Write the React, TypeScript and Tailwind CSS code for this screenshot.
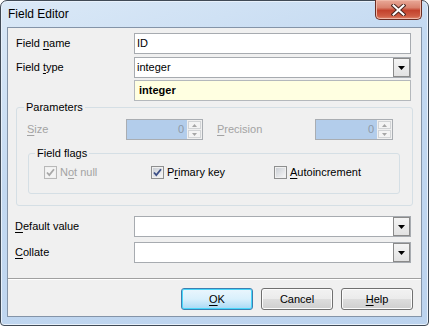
import React from 'react'

function U({ children }: { children: React.ReactNode }) {
  return <span className="underline underline-offset-[2px]">{children}</span>
}

function DropArrow() {
  return (
    <div className="flex h-[19px] w-[17px] items-center justify-center border border-[#8a8a8a] bg-gradient-to-b from-[#f4f4f4] to-[#e2e2e2]">
      <svg width="7" height="4" viewBox="0 0 7 4">
        <path d="M0 0h7L3.5 4z" fill="#000" />
      </svg>
    </div>
  )
}

function Combo({ value }: { value?: string }) {
  return (
    <div className="flex h-[21px] flex-1 items-center border border-[#a7abb0] bg-white pl-[1px] pr-[0px]">
      <span className="flex-1 pl-[1px]">{value}</span>
      <DropArrow />
    </div>
  )
}

function Spin({ width }: { width: string }) {
  return (
    <div className={`flex h-[21px] items-stretch border border-[#a9adb2] bg-[#b3cdeb] ${width}`}>
      <span className="flex flex-1 items-center justify-end pr-[3px] text-[#8d99a8]">0</span>
      <div className="flex w-[15px] flex-col gap-[1px] bg-[#f0f0f0] p-[1px]">
        <div className="flex flex-1 items-center justify-center border border-[#d2d4d6] bg-[#f4f4f4]">
          <svg width="5" height="3" viewBox="0 0 5 3">
            <path d="M0 3h5L2.5 0z" fill="#a6a6a6" />
          </svg>
        </div>
        <div className="flex flex-1 items-center justify-center border border-[#d2d4d6] bg-[#f4f4f4]">
          <svg width="5" height="3" viewBox="0 0 5 3">
            <path d="M0 0h5L2.5 3z" fill="#a6a6a6" />
          </svg>
        </div>
      </div>
    </div>
  )
}

function Check({ checked, disabled }: { checked?: boolean; disabled?: boolean }) {
  return (
    <div
      className={`flex h-[13px] w-[13px] items-center justify-center border p-[1px] ${
        disabled ? 'border-[#b8b8b8]' : 'border-[#8e8f8f]'
      }`}
    >
      <div
        className={`flex h-full w-full items-center justify-center ${
          disabled ? 'bg-[#f4f4f4]' : 'bg-gradient-to-br from-[#cbcfd5] to-[#f6f6f6]'
        }`}
      >
        {checked && (
          <svg width="9" height="9" viewBox="0 0 9 9">
            <path
              d="M1 4.5l2.3 2.6L8 1.2"
              fill="none"
              stroke={disabled ? '#a8a8a8' : '#3c4f86'}
              strokeWidth="1.8"
            />
          </svg>
        )}
      </div>
    </div>
  )
}

function WinButton({ children, isDefault }: { children: React.ReactNode; isDefault?: boolean }) {
  return (
    <div
      className={`flex h-[22px] w-[72px] items-center justify-center rounded-[3px] border ${
        isDefault
          ? 'border-[#3c7fb1] bg-gradient-to-b from-[#eaf6fd] via-[#d9f0fc] to-[#a7d9f5] shadow-[inset_0_0_0_1px_#48d7fb]'
          : 'border-[#707070] bg-[linear-gradient(to_bottom,#f2f2f2_0%,#ebebeb_50%,#dddddd_51%,#cfcfcf_100%)] shadow-[inset_0_0_0_1px_#fcfcfc]'
      }`}
    >
      {children}
    </div>
  )
}

export default function App() {
  return (
    <div className="flex h-[326px] w-[429px] flex-col rounded-t-[7px] rounded-b-[4px] border border-[#404a56] bg-[linear-gradient(160deg,#dbe9f7_0%,#c3d9f1_40%,#bcd3ee_100%)] px-[6px] pb-[8px] font-['Liberation_Sans',Arial,sans-serif] text-[11px] leading-[13px] text-black shadow-[inset_0_0_0_1px_#e8f1fb]">
      <div className="flex h-[26px] items-start">
        <span className="pl-[1px] pt-[6px] text-[12px] leading-[14px] text-black">Field Editor</span>
        <div className="-mt-px ml-auto flex h-[20px] w-[47px] items-center justify-center rounded-b-[5px] border border-t-0 border-[#6b2d23] bg-[linear-gradient(to_bottom,#e9a998_0%,#d9826e_40%,#c3422c_55%,#cf5d44_85%,#e08a70_100%)] shadow-[inset_0_0_0_1px_#f0b8a8]">
          <svg width="15" height="12" viewBox="0 0 15 12">
            <path d="M2.5 1.5l10 9M12.5 1.5l-10 9" stroke="#4a2620" strokeWidth="4" strokeLinecap="square" />
            <path d="M2.5 1.5l10 9M12.5 1.5l-10 9" stroke="#ffffff" strokeWidth="2" strokeLinecap="square" />
          </svg>
        </div>
      </div>

      <div className="flex flex-1 flex-col border border-[#8494a8] bg-[#f0f0f0]">
        <div className="flex flex-col pl-[8px] pr-[10px] pt-[5px]">
          <div className="flex h-[21px] items-center">
            <span className="w-[118px]">
              Field <U>n</U>ame
            </span>
            <div className="flex h-[21px] flex-1 items-center border border-[#a7abb0] bg-white pl-[2px]">ID</div>
          </div>
          <div className="mt-[3px] flex h-[21px] items-center">
            <span className="w-[118px]">
              Field <U>t</U>ype
            </span>
            <Combo value="integer" />
          </div>
          <div className="mt-[2px] flex h-[21px] items-center">
            <span className="w-[118px]" />
            <div className="flex h-[21px] flex-1 items-center border border-[#b4b8bc] bg-[#ffffe1] pl-[4px] font-bold">
              integer
            </div>
          </div>
        </div>

        <fieldset className="mx-[8px] rounded-[3px] border border-[#d5dfe5] pb-[11px]">
          <legend className="ml-[7px] px-[2px] leading-[13px]">Parameters</legend>
          <div className="flex items-center pl-[10px] pt-[5px] text-[#a3a3a3]">
            <span className="w-[99px]">
              <U>S</U>ize
            </span>
            <Spin width="w-[77px]" />
            <span className="ml-[14px] w-[98px]">
              <U>P</U>recision
            </span>
            <Spin width="w-[78px]" />
          </div>
          <fieldset className="ml-[11px] mr-[12px] mt-[7px] rounded-[3px] border border-[#d5dfe5] pb-[14px]">
            <legend className="ml-[6px] px-[2px] leading-[13px]">Field flags</legend>
            <div className="flex items-center pl-[15px] pt-[6px]">
              <div className="flex w-[107px] items-center gap-[3px] text-[#a3a3a3]">
                <Check checked disabled />
                <span>
                  N<U>o</U>t null
                </span>
              </div>
              <div className="flex w-[123px] items-center gap-[3px]">
                <Check checked />
                <span>
                  P<U>r</U>imary key
                </span>
              </div>
              <div className="flex items-center gap-[3px]">
                <Check />
                <span>
                  <U>A</U>utoincrement
                </span>
              </div>
            </div>
          </fieldset>
        </fieldset>

        <div className="flex flex-col pl-[7px] pr-[10px] pt-[10px]">
          <div className="flex h-[21px] items-center">
            <span className="w-[119px]">
              <U>D</U>efault value
            </span>
            <Combo />
          </div>
          <div className="mt-[5px] flex h-[21px] items-center">
            <span className="w-[119px]">
              <U>C</U>ollate
            </span>
            <Combo />
          </div>
        </div>

        <div className="mt-[15px] border-b border-t border-b-white border-t-[#a0a0a0]" />

        <div className="flex justify-end gap-[8px] pr-[8px] pt-[8px]">
          <WinButton isDefault>
            <U>O</U>K
          </WinButton>
          <WinButton>Cancel</WinButton>
          <WinButton>
            <U>H</U>elp
          </WinButton>
        </div>
      </div>
    </div>
  )
}
